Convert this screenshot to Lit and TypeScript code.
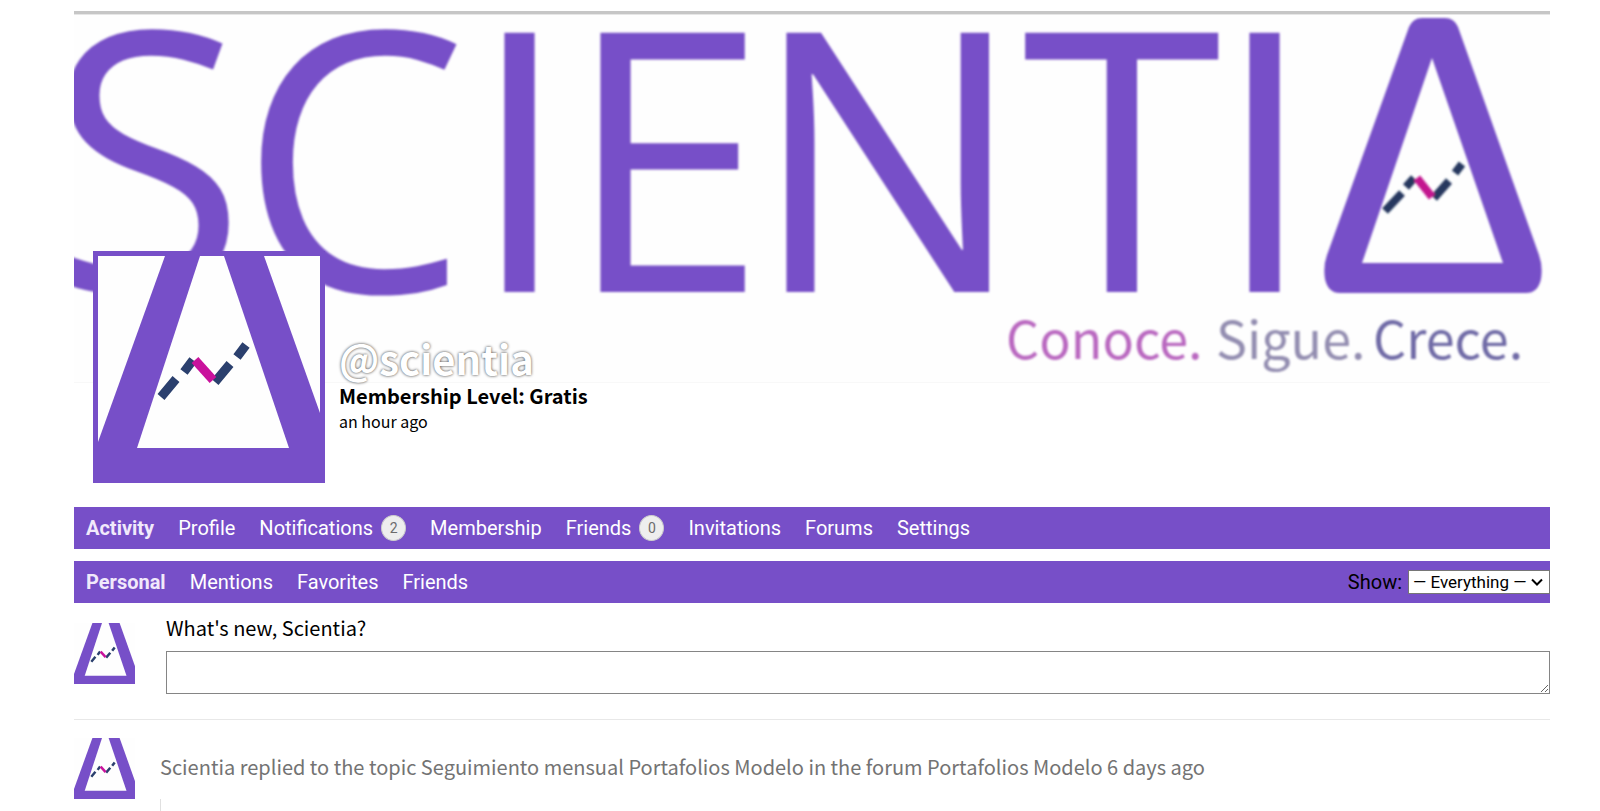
import { LitElement, html, css } from "lit";
import { customElement, property } from "lit/decorators.js";

interface NavItem {
  label: string;
  count?: number;
  current?: boolean;
}

const PRIMARY: NavItem[] = [
  { label: "Activity", current: true },
  { label: "Profile" },
  { label: "Notifications", count: 2 },
  { label: "Membership" },
  { label: "Friends", count: 0 },
  { label: "Invitations" },
  { label: "Forums" },
  { label: "Settings" },
];

const SECONDARY: NavItem[] = [
  { label: "Personal", current: true },
  { label: "Mentions" },
  { label: "Favorites" },
  { label: "Friends" },
];

@customElement("scientia-avatar")
export class ScientiaAvatar extends LitElement {
  static styles = css`
    :host {
      display: block;
      flex: none;
    }
    .picture {
      display: block;
      width: 100%;
      height: 100%;
      background: #fefefe;
    }
    .flask {
      fill: #774fc8;
    }
    .inside {
      fill: #fefefe;
    }
    .dash {
      fill: none;
      stroke: #2b406e;
      stroke-width: 9;
    }
    .drop {
      fill: none;
      stroke: #c9129c;
      stroke-width: 9;
    }
  `;

  render() {
    return html`
      <svg class="picture" viewBox="0 0 222 222" role="img" aria-label="Scientia">
        <path class="flask" d="M67 0H166L222 157V222H0V186Z" />
        <path class="inside" d="M102 0H126L191 192H39Z" />
        <path class="dash" d="M63 141L78 123M86 116L95 104M117 126L132 108M139 101L148 89" />
        <path class="drop" d="M97 104L115 124" />
      </svg>
    `;
  }
}

@customElement("scientia-cover")
export class ScientiaCover extends LitElement {
  static styles = css`
    :host {
      display: block;
    }
    .cover {
      display: block;
      width: 100%;
      height: auto;
      background: #fefefe;
    }
    .edge {
      fill: #c6c6c6;
    }
    .edge-fade {
      fill: #e6e6e6;
    }
    .foot {
      fill: #f8f8f8;
    }
    .word {
      font-family: "Open Sans", "Noto Sans", sans-serif;
      font-size: 363px;
      font-weight: 400;
      fill: #774fc8;
    }
    .triangle {
      fill: #774fc8;
      fill-rule: evenodd;
    }
    .dash,
    .drop {
      fill: none;
      stroke: #26385f;
      stroke-width: 8;
    }
    .drop {
      stroke: #c3168f;
    }
    .tagline {
      font-family: "Noto Sans CJK JP", "Noto Sans", sans-serif;
      font-size: 52px;
      font-weight: 400;
    }
    .conoce {
      fill: #b968c0;
    }
    .sigue {
      fill: #938db0;
    }
    .crece {
      fill: #6f6aa6;
    }
  `;

  render() {
    return html`
      <svg class="cover" viewBox="0 0 1476 372" role="img" aria-label="Scientia. Conoce. Sigue. Crece.">
        <defs>
          <filter id="soft" x="-2%" y="-5%" width="104%" height="110%">
            <feGaussianBlur stdDeviation="1.3" />
          </filter>
        </defs>
        <rect class="edge" width="1476" height="3" />
        <rect class="edge-fade" y="3" width="1476" height="1" />
        <rect class="foot" y="371" width="1476" height="1" />
        <g filter="url(#soft)">
          <text class="word" y="281" x="-27 165 395 491 677 948 1140">SCIENTI</text>
          <path
            class="triangle"
            d="M1348 7H1371Q1380 7 1384 16L1465 244Q1469 255 1467 268Q1464 282 1452 282H1266Q1254 282 1251 268Q1249 255 1253 244L1335 16Q1339 7 1348 7ZM1358 47L1288 252H1429Z"
          />
          <path class="dash" d="M1311 200L1328 182M1332 176L1340 167M1360 187L1375 170M1381 162L1388 153" />
          <path class="drop" d="M1343 167L1358 186" />
        </g>
        <g class="tagline" filter="url(#soft)">
          <text class="conoce" x="932" y="348">Conoce.</text>
          <text class="sigue" x="1142" y="348">Sigue.</text>
          <text class="crece" x="1299" y="348">Crece.</text>
        </g>
      </svg>
    `;
  }
}

@customElement("nav-bar")
export class NavBar extends LitElement {
  @property({ attribute: false }) items: NavItem[] = [];
  @property() label = "";

  static styles = css`
    :host {
      display: block;
    }
    .bar {
      display: flex;
      align-items: center;
      justify-content: space-between;
      min-height: 42px;
      background: #774fc8;
    }
    .list {
      display: flex;
      flex-wrap: wrap;
      margin: 0;
      padding: 0;
      list-style: none;
    }
    .link {
      display: flex;
      align-items: center;
      gap: 8px;
      padding: 0 12px;
      font-size: 20px;
      line-height: 42px;
      color: #fff;
      text-decoration: none;
    }
    .current {
      font-weight: 700;
      color: #f1e9fb;
    }
    .count {
      box-sizing: border-box;
      min-width: 25px;
      height: 26px;
      border: 1px solid #ccc;
      border-radius: 50%;
      background: #eee;
      color: #6c6c6c;
      font-size: 14px;
      line-height: 24px;
      text-align: center;
    }
  `;

  render() {
    return html`
      <nav class="bar" aria-label=${this.label}>
        <ul class="list">
          ${this.items.map(
            (item) => html`
              <li>
                <a class="link ${item.current ? "current" : ""}" href="#"
                  >${item.label}${item.count === undefined
                    ? ""
                    : html`<span class="count">${item.count}</span>`}</a
                >
              </li>
            `
          )}
        </ul>
        <slot></slot>
      </nav>
    `;
  }
}

@customElement("app-root")
export class AppRoot extends LitElement {
  static styles = css`
    :host {
      display: flex;
      flex-direction: column;
      box-sizing: border-box;
      min-height: 100vh;
      padding: 11px 50px 0 74px;
      background: #fff;
      color: #000;
      font-family: "Noto Sans CJK JP", "Noto Sans", sans-serif;
      font-size: 20px;
    }
    .profile {
      position: relative;
      display: flex;
      gap: 14px;
      margin: -132px 0 24px;
      padding-left: 19px;
    }
    .portrait {
      width: 222px;
      height: 222px;
      border: 5px solid #774fc8;
    }
    .identity {
      padding-top: 82px;
    }
    .handle {
      margin: 0;
      font-size: 40px;
      line-height: 50px;
      font-weight: 700;
      color: #fff;
      text-shadow: 0 0 3px rgba(0, 0, 0, 0.8);
    }
    .level {
      margin: 0;
      font-size: 20px;
      line-height: 26px;
      font-weight: 700;
    }
    .seen {
      margin: 0;
      font-size: 16px;
      line-height: 24px;
    }
    .menu {
      font-family: Roboto, "Noto Sans", sans-serif;
      margin-bottom: 12px;
    }
    .filter {
      display: flex;
      align-items: center;
      gap: 6px;
    }
    .filter-label {
      font-size: 20px;
    }
    .filter-select {
      appearance: none;
      height: 24px;
      padding: 0 22px 0 4px;
      border: 1px solid #767676;
      border-radius: 0;
      background: #fff
        url("data:image/svg+xml,%3Csvg xmlns='http://www.w3.org/2000/svg' width='12' height='8'%3E%3Cpath d='M1 1.5L6 6.500L11 1.500' fill='none' stroke='%23000' stroke-width='2'/%3E%3C/svg%3E")
        no-repeat right 6px center;
      color: #000;
      font-family: inherit;
      font-size: 17px;
    }
    .post {
      display: flex;
      gap: 31px;
      padding: 8px 0 25px;
      border-bottom: 1px solid #e8e8e8;
    }
    .thumb {
      width: 61px;
      height: 61px;
    }
    .composer {
      flex: 1;
      display: flex;
      flex-direction: column;
    }
    .question {
      line-height: 30px;
      margin: -10px 0 8px;
    }
    .entry {
      box-sizing: border-box;
      width: 100%;
      height: 43px;
      margin: 0;
      border: 1px solid #858585;
      border-radius: 0;
      background: #fff;
      font: inherit;
      resize: vertical;
    }
    .activity {
      flex: 1;
      display: grid;
      grid-template-columns: 61px 1fr;
      grid-template-rows: auto 1fr;
      column-gap: 25px;
      padding-top: 18px;
    }
    .summary {
      margin: 0;
      padding-bottom: 4px;
      align-self: center;
      line-height: 30px;
      color: #737373;
    }
    .excerpt {
      grid-column: 2;
      border-left: 1px solid #e0e0e0;
    }
  `;

  render() {
    return html`
      <scientia-cover></scientia-cover>
      <header class="profile">
        <scientia-avatar class="portrait"></scientia-avatar>
        <div class="identity">
          <h2 class="handle">@scientia</h2>
          <p class="level">Membership Level: Gratis</p>
          <p class="seen">an hour ago</p>
        </div>
      </header>
      <nav-bar class="menu" label="Member" .items=${PRIMARY}></nav-bar>
      <nav-bar class="menu" label="Activity" .items=${SECONDARY}>
        <div class="filter">
          <label class="filter-label" for="show">Show:</label>
          <select class="filter-select" id="show">
            <option>— Everything —</option>
          </select>
        </div>
      </nav-bar>
      <form class="post">
        <scientia-avatar class="thumb"></scientia-avatar>
        <div class="composer">
          <label class="question" for="whats-new">What's new, Scientia?</label>
          <textarea class="entry" id="whats-new"></textarea>
        </div>
      </form>
      <article class="activity">
        <scientia-avatar class="thumb"></scientia-avatar>
        <p class="summary">
          Scientia replied to the topic Seguimiento mensual Portafolios Modelo in the forum Portafolios Modelo 6 days ago
        </p>
        <div class="excerpt"></div>
      </article>
    `;
  }
}
